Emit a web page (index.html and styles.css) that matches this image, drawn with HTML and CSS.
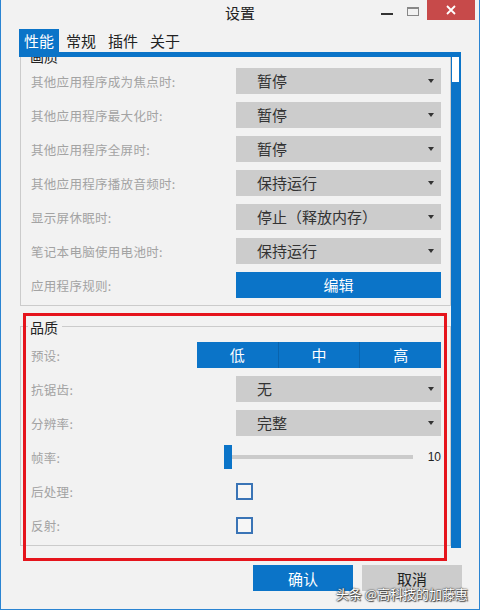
FILE: index.html
```html
<!DOCTYPE html>
<html lang="zh-CN">
<head>
    <meta charset="UTF-8">
    <meta name="viewport" content="width=device-width, initial-scale=1.0">
    <title>设置</title>
    <link rel="stylesheet" href="styles.css">
</head>
<body>
    <div class="window">
        <div class="titlebar">
            <span></span>
            <span class="title">设置</span>
            <div class="controls">
                <span class="btn-min"></span>
                <span class="btn-max"></span>
                <span class="btn-close">
                    <svg width="10" height="10" viewBox="0 0 10 10"><path d="M1 1L9 9M9 1L1 9" stroke="#fff" stroke-width="1.8"/></svg>
                </span>
            </div>
        </div>
        <div class="tabs">
            <span class="tab active">性能</span>
            <span class="tab">常规</span>
            <span class="tab">插件</span>
            <span class="tab">关于</span>
        </div>
        <div class="tab-page">
            <div class="viewport">
                <div class="group group-first">
                    <span class="legend">画质</span>
                    <div class="row"><span class="label">其他应用程序成为焦点时:</span><div class="select">暂停</div></div>
                    <div class="row"><span class="label">其他应用程序最大化时:</span><div class="select">暂停</div></div>
                    <div class="row"><span class="label">其他应用程序全屏时:</span><div class="select">暂停</div></div>
                    <div class="row"><span class="label">其他应用程序播放音频时:</span><div class="select">保持运行</div></div>
                    <div class="row"><span class="label">显示屏休眠时:</span><div class="select">停止（释放内存）</div></div>
                    <div class="row"><span class="label">笔记本电脑使用电池时:</span><div class="select">保持运行</div></div>
                    <div class="row"><span class="label">应用程序规则:</span><div class="btn-edit">编辑</div></div>
                </div>
                <div class="group group-second">
                    <span class="legend">品质</span>
                    <div class="row"><span class="label">预设:</span>
                        <div class="segmented"><span>低</span><span>中</span><span>高</span></div>
                    </div>
                    <div class="row"><span class="label">抗锯齿:</span><div class="select">无</div></div>
                    <div class="row"><span class="label">分辨率:</span><div class="select">完整</div></div>
                    <div class="row"><span class="label">帧率:</span>
                        <div class="slider"><span class="slider-thumb"></span><span class="slider-track"></span><span class="slider-value">10</span></div>
                    </div>
                    <div class="row"><span class="label">后处理:</span><div class="check-cell"><span class="checkbox"></span></div></div>
                    <div class="row"><span class="label">反射:</span><div class="check-cell"><span class="checkbox"></span></div></div>
                </div>
            </div>
            <div class="scrollbar"><div class="thumb"></div></div>
        </div>
        <div class="footer">
            <button class="btn-ok">确认</button>
            <button class="btn-cancel">取消</button>
        </div>
        <div class="highlight"></div>
        <div class="watermark">头条 @高科技的加藤惠</div>
    </div>
</body>
</html>
```

FILE: styles.css
```css
body {
    margin: 0;
    font-family: "Noto Sans CJK SC", "Noto Sans", sans-serif;
    background: #f2f2f2;
}
.window {
    position: relative;
    width: 480px;
    height: 610px;
    box-sizing: border-box;
    border: 1px solid #2a84d2;
    border-top: none;
    background: #f2f2f2;
    color: #222;
}
.titlebar {
    height: 29px;
    display: grid;
    grid-template-columns: 1fr auto 1fr;
}
.title {
    font-size: 15px;
    line-height: 26px;
    color: #222;
}
.controls {
    display: flex;
    justify-content: flex-end;
    align-items: flex-start;
    padding-right: 4px;
}
.btn-min {
    width: 12px;
    height: 2px;
    background: #333;
    margin: 13px 14px 0 0;
}
.btn-max {
    width: 10px;
    height: 6px;
    border: 1px solid #888;
    border-top-width: 2px;
    margin: 7px 8px 0 0;
}
.btn-close {
    width: 48px;
    height: 20px;
    background: #c74a4a;
    display: flex;
    justify-content: center;
    align-items: center;
}
.tabs {
    height: 23px;
    display: flex;
    gap: 2px;
    padding-left: 18px;
}
.tab {
    padding: 0 5px;
    font-size: 15px;
    line-height: 23px;
    color: #222;
}
.tab.active {
    background: #0b74c8;
    color: #fff;
}
.tab-page {
    display: flex;
    margin-left: 18px;
    width: 442px;
    padding-left: 1px;
    box-sizing: border-box;
    border-top: 5px solid #0b74c8;
}
.viewport {
    width: 431px;
    height: 491px;
    overflow: hidden;
}
.scrollbar {
    width: 10px;
    height: 491px;
    background: #0b74c8;
}
.thumb {
    width: 7px;
    height: 25px;
    background: #fff;
    margin-left: 1px;
}
.group {
    position: relative;
    border: 1px solid #cbcbcb;
    display: flex;
    flex-direction: column;
    gap: 8px;
}
.group-first {
    margin-top: -2px;
    padding: 12px 9px 7px 10px;
}
.group-second {
    margin-top: 20px;
    padding: 15px 9px 7px 10px;
}
.legend {
    position: absolute;
    top: -10px;
    left: 7px;
    padding: 0 4px 0 2px;
    background: #f2f2f2;
    font-size: 14px;
    line-height: 20px;
    color: #222;
}
.row {
    height: 26px;
    display: flex;
    align-items: center;
}
.label {
    flex: 1;
    font-size: 12.5px;
    letter-spacing: 0.3px;
    color: #a3a3a3;
}
.select {
    position: relative;
    width: 205px;
    height: 26px;
    box-sizing: border-box;
    padding-left: 21px;
    background: #cccccc;
    font-size: 15px;
    line-height: 26px;
    color: #333;
}
.select::after {
    content: "";
    position: absolute;
    right: 7px;
    top: 11px;
    border-left: 3px solid transparent;
    border-right: 3px solid transparent;
    border-top: 4px solid #333;
}
.btn-edit {
    width: 205px;
    height: 26px;
    background: #0b74c8;
    color: #fff;
    font-size: 15px;
    line-height: 26px;
    text-align: center;
}
.segmented {
    width: 244px;
    height: 26px;
    display: flex;
    background: #0b74c8;
}
.segmented span {
    flex: 1;
    color: #fff;
    font-size: 15px;
    line-height: 26px;
    text-align: center;
    border-left: 1px solid #0963ad;
}
.segmented span:first-child {
    border-left: none;
}
.slider {
    width: 217px;
    height: 26px;
    display: flex;
    align-items: center;
}
.slider-thumb {
    width: 8px;
    height: 24px;
    background: #0b74c8;
}
.slider-track {
    flex: 1;
    height: 4px;
    background: #cbcbcb;
    margin-right: 15px;
}
.slider-value {
    font-family: "Liberation Sans", Arial, sans-serif;
    font-size: 12px;
    color: #222;
}
.check-cell {
    width: 205px;
    display: flex;
    align-items: center;
}
.checkbox {
    width: 17px;
    height: 17px;
    box-sizing: border-box;
    border: 2px solid #3a74b6;
    background: #f6f6f6;
}
.footer {
    display: flex;
    justify-content: flex-end;
    gap: 9px;
    margin-top: 17px;
    padding-right: 17px;
}
.footer button {
    width: 100px;
    height: 26px;
    border: none;
    font-family: inherit;
    font-size: 15px;
    padding: 0;
}
.btn-ok {
    background: #0b74c8;
    color: #fff;
}
.btn-cancel {
    background: #cccccc;
    color: #222;
}
.highlight {
    position: absolute;
    left: 22px;
    top: 313px;
    width: 424px;
    height: 248px;
    box-sizing: border-box;
    border: 3px solid #e5141c;
}
.watermark {
    position: absolute;
    right: 11px;
    top: 584px;
    font-size: 13px;
    color: #fff;
    text-shadow: 0 0 2px #333, 0 0 1px #333, 1px 1px 1px #444;
}
```
